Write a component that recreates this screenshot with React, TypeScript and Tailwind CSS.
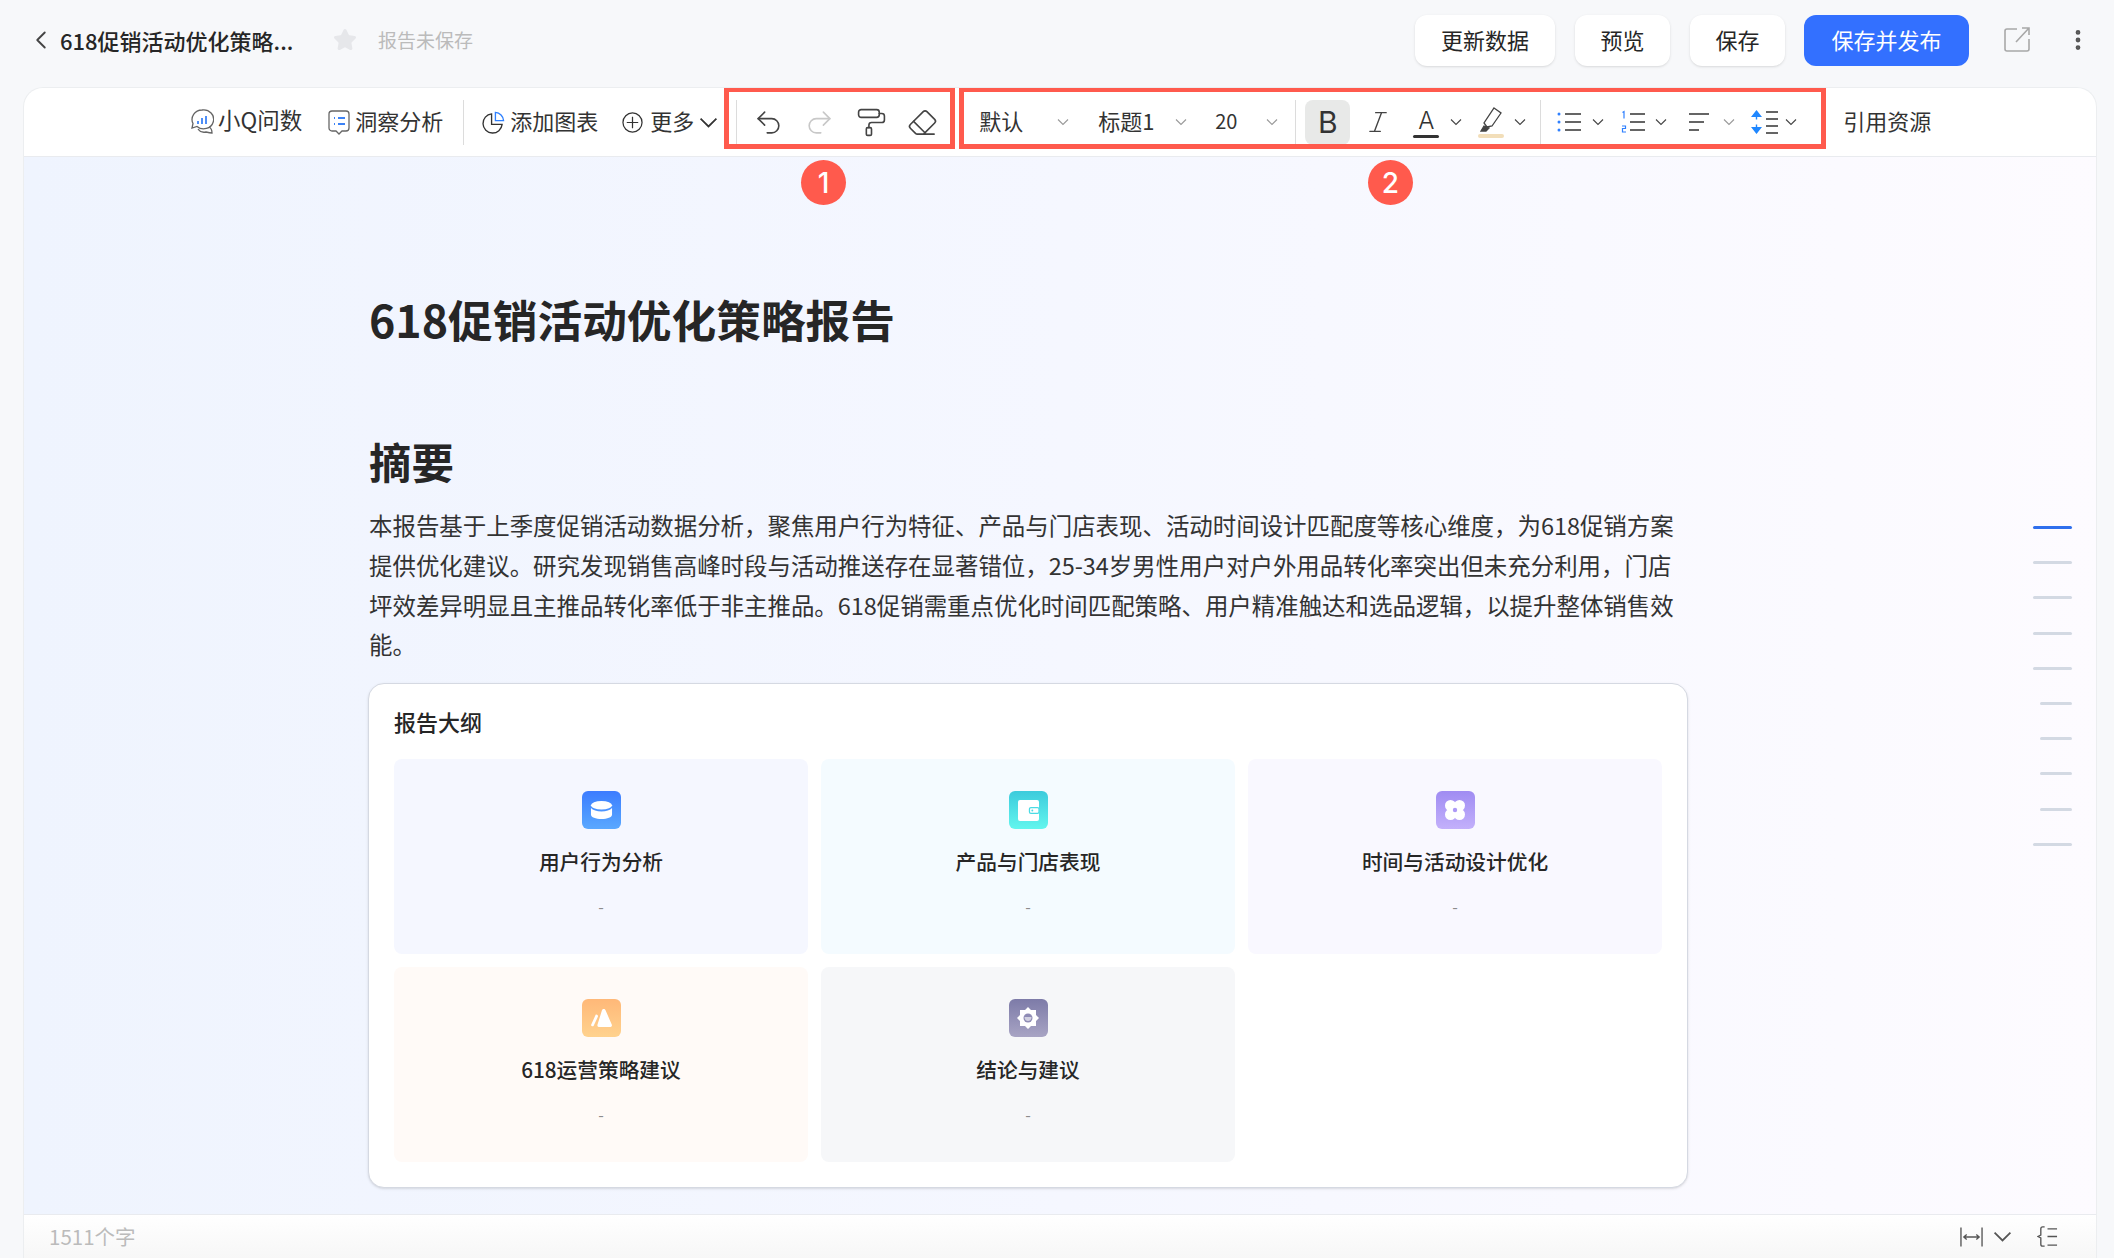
import React from 'react';
import { ChevronLeft, Star, Undo2, Redo2, PaintRoller, Eraser, Italic, MoreVertical } from 'lucide-react';

function Chevron({ className = 'w-[12px] h-[12px] text-[#555]' }: { className?: string }) {
  return (
    <svg viewBox="0 0 12 12" className={className} fill="none" stroke="currentColor" strokeWidth="1.1">
      <path d="M1 3.500 6 8.500 11 3.500" />
    </svg>
  );
}

function Sep() {
  return <div className="w-px h-[45px] bg-[#dcdcdc] shrink-0" />;
}

function BulletIcon() {
  return (
    <svg viewBox="0 0 24 24" className="w-[24px] h-[24px]" fill="none" strokeWidth="1.6">
      <circle cx="2" cy="4" r="1.500" fill="#2f80ff" />
      <circle cx="2" cy="12" r="1.500" fill="#2f80ff" />
      <circle cx="2" cy="20" r="1.500" fill="#2f80ff" />
      <path d="M8 4h16M8 12h16M8 20h16" stroke="#333" />
    </svg>
  );
}

function NumberIcon() {
  return (
    <svg viewBox="0 0 24 24" className="w-[24px] h-[24px]" fill="none" strokeWidth="1.6">
      <path d="M1.500 2.500 3 1.500v7M1 16h3.500v2.500H1.500V22H5" stroke="#2f80ff" strokeWidth="1.200" />
      <path d="M9 4h15M9 12h15M9 20h15" stroke="#333" />
    </svg>
  );
}

function AlignIcon() {
  return (
    <svg viewBox="0 0 22 24" className="w-[22px] h-[24px]" fill="none" stroke="#333" strokeWidth="1.6">
      <path d="M1 4h20M1 12h15M1 20h10" />
    </svg>
  );
}

function LineHeightIcon() {
  return (
    <svg viewBox="0 0 28 26" className="w-[28px] h-[26px]" fill="none" strokeWidth="1.6">
      <path d="M5.500 1 11 8H0ZM5.500 25 0 18H11Z" fill="#1f87ff" />
      <path d="M5.500 8v2.500M5.500 15.500V18" stroke="#1f87ff" strokeWidth="1.400" />
      <path d="M15 3h12M15 10h12M15 17h12M15 24h12" stroke="#333" />
    </svg>
  );
}

function Cell({ bg, icon, iconBg, title }: { bg: string; icon: React.ReactNode; iconBg: string; title: string }) {
  return (
    <div className={`h-[195px] rounded-[8px] flex flex-col items-center pt-[32px] ${bg}`}>
      <div className={`w-[39px] h-[38px] rounded-[6px] flex items-center justify-center ${iconBg}`}>{icon}</div>
      <div className="mt-[17px] text-[20.7px] leading-[30px] font-medium text-[#262626]">{title}</div>
      <div className="mt-[18px] text-[16px] leading-[24px] text-[#8c8c8c]">-</div>
    </div>
  );
}

export default function App() {
  return (
    <div className="w-full h-screen overflow-hidden flex flex-col bg-[#f7f8fa] text-[#262626] font-['Noto_Sans_CJK_SC',sans-serif]">
      {/* Top bar */}
      <header className="h-[87px] shrink-0 flex items-center pl-[26px] pb-[7px]">
        <ChevronLeft className="w-[30px] h-[30px] text-[#444]" strokeWidth={1.5} />
        <div className="ml-[4px] w-[240px] text-[22px] leading-[30px] font-medium text-[#262626]">618促销活动优化策略...</div>
        <Star className="ml-[33px] w-[24px] h-[24px] text-[#e6e7ea]" fill="currentColor" />
        <div className="ml-[21px] text-[19px] text-[#bbbbbb]">报告未保存</div>
        <button className="ml-auto w-[140px] h-[51px] pb-[2px] rounded-[12px] bg-white shadow-sm text-[22px]">更新数据</button>
        <button className="ml-[20px] w-[95px] h-[51px] pb-[2px] rounded-[12px] bg-white shadow-sm text-[22px]">预览</button>
        <button className="ml-[20px] w-[95px] h-[51px] pb-[2px] rounded-[12px] bg-white shadow-sm text-[22px]">保存</button>
        <button className="ml-[19px] w-[165px] h-[51px] pb-[2px] rounded-[12px] bg-[#3370ff] text-white text-[22px]">保存并发布</button>
        <svg viewBox="0 0 26 26" className="ml-[35px] w-[26px] h-[26px]" fill="none" stroke="#a8a8a8" strokeWidth="1.6">
          <path d="M13 2H3a2 2 0 0 0-2 2v18a2 2 0 0 0 2 2h20a2 2 0 0 0 2-2V12M12 15 25 1M18 1h7v7" />
        </svg>
        <MoreVertical className="ml-[35px] mr-[23px] w-[26px] h-[26px] text-[#555]" strokeWidth={2.4} />
      </header>

      {/* Editor panel */}
      <main className="relative flex-1 min-h-0 ml-[23px] mr-[17px] flex flex-col rounded-t-[20px] border border-b-0 border-[#eceef0] bg-white overflow-hidden">
        <div className="h-[69px] shrink-0 flex items-center border-b border-[#e9ebef] pl-[166px] text-[22px] text-[#333]">
          <svg viewBox="0 0 24 28" className="w-[24px] h-[28px] shrink-0" fill="none" stroke="#666" strokeWidth="1.3">
            <path d="M12 2a10 9.500 0 0 0-9 13.500L2 20l5-1.500A10 9.500 0 1 0 12 2Z" />
            <path d="M19 19c2 1 3 3 3 6-2 0-4-.5-6-1-3 .7-6 0-8-3" />
            <path d="M8 13v3M12 10v6M16 8v8" stroke="#3b82f6" strokeWidth="1.8" />
          </svg>
          <span className="ml-[4px] pb-[4px] text-[22.5px]">小Q问数</span>
          <svg viewBox="0 0 22 28" className="ml-[26px] w-[22px] h-[28px] shrink-0" fill="none" stroke="#666" strokeWidth="1.3">
            <path d="M4 3h14a3 3 0 0 1 3 3v14a3 3 0 0 1-3 3h-4l-3 3-3-3H4a3 3 0 0 1-3-3V6a3 3 0 0 1 3-3Z" />
            <path d="M6 10h1M10 10h7M6 16h1M10 16h7" stroke="#3b82f6" strokeWidth="1.8" />
          </svg>
          <span className="ml-[5px] pb-[3px]">洞察分析</span>
          <div className="ml-[20px]"><Sep /></div>
          <svg viewBox="0 0 24 24" className="ml-[18px] w-[23px] h-[23px] shrink-0" fill="none" strokeWidth="1.4">
            <path d="M10 3a10 10 0 1 0 11 11H10Z" stroke="#333" />
            <path d="M14 1.500A9 9 0 0 1 22.500 10H14Z" stroke="#2f80ff" />
          </svg>
          <span className="ml-[5px] pb-[3px]">添加图表</span>
          <svg viewBox="0 0 22 22" className="ml-[24px] w-[21px] h-[21px] shrink-0" fill="none" stroke="#333" strokeWidth="1.3">
            <circle cx="11" cy="11" r="10" />
            <path d="M11 5v12M5 11h12" />
          </svg>
          <span className="ml-[7px] pb-[3px]">更多</span>
          <Chevron className="ml-[5px] w-[19px] h-[19px] text-[#333] shrink-0" />
          <div className="ml-[18px]"><Sep /></div>

          <Undo2 className="ml-[16px] w-[31px] h-[31px] text-[#444] shrink-0" strokeWidth={1.25} />
          <Redo2 className="ml-[20px] w-[31px] h-[31px] text-[#c8c8c8] shrink-0" strokeWidth={1.25} />
          <PaintRoller className="ml-[21px] w-[31px] h-[31px] text-[#444] shrink-0" strokeWidth={1.25} />
          <Eraser className="ml-[20px] w-[31px] h-[31px] text-[#444] shrink-0" strokeWidth={1.25} />

          <span className="ml-[41px] w-[44px] pb-[3px] shrink-0 text-[#333]">默认</span>
          <Chevron className="ml-[34px] w-[12px] h-[12px] text-[#999] shrink-0" />
          <span className="ml-[29px] w-[56px] pb-[3px] shrink-0 text-[#333] whitespace-nowrap">标题1</span>
          <Chevron className="ml-[21px] w-[12px] h-[12px] text-[#999] shrink-0" />
          <span className="ml-[28px] w-[25px] pb-[2px] shrink-0 text-[20px] text-[#333]">20</span>
          <Chevron className="ml-[26px] w-[12px] h-[12px] text-[#999] shrink-0" />
          <div className="ml-[17px]"><Sep /></div>
          <div className="ml-[9px] w-[45px] h-[45px] rounded-[8px] bg-[#e8e9e8] shrink-0 flex items-center justify-center text-[30px] font-['Inter',sans-serif] text-[#333]">B</div>
          <Italic className="ml-[14px] w-[28px] h-[28px] text-[#444] shrink-0" strokeWidth={1.2} />
          <div className="ml-[22px] w-[24px] shrink-0 flex flex-col items-center">
            <span className="text-[24px] leading-[28px] font-['Inter',sans-serif] font-light">A</span>
            <div className="w-[26px] h-[3px] rounded-[2px] bg-[#333]" />
          </div>
          <Chevron className="ml-[12px] w-[12px] h-[12px] text-[#444] shrink-0" />
          <div className="ml-[16px] w-[26px] shrink-0 flex flex-col items-center">
            <svg viewBox="0 0 24 26" className="w-[24px] h-[26px]" fill="none" stroke="#444" strokeWidth="1.3">
              <path d="M15 2l7 5-9 13-5 1-3-4Z" />
              <path d="M5 20l5 2-3 3H2Z" fill="#444" />
            </svg>
            <div className="mt-[2px] w-[26px] h-[4px] rounded-[2px] bg-[#f2deb9]" />
          </div>
          <Chevron className="ml-[10px] w-[12px] h-[12px] text-[#444] shrink-0" />
          <div className="ml-[14px]"><Sep /></div>
          <div className="ml-[16px] shrink-0"><BulletIcon /></div>
          <Chevron className="ml-[11px] w-[12px] h-[12px] text-[#444] shrink-0" />
          <div className="ml-[17px] shrink-0"><NumberIcon /></div>
          <Chevron className="ml-[10px] w-[12px] h-[12px] text-[#444] shrink-0" />
          <div className="ml-[21px] shrink-0"><AlignIcon /></div>
          <Chevron className="ml-[13px] w-[12px] h-[12px] text-[#999] shrink-0" />
          <div className="ml-[16px] shrink-0"><LineHeightIcon /></div>
          <Chevron className="ml-[6px] w-[12px] h-[12px] text-[#444] shrink-0" />
          <span className="ml-[46px] pb-[3px] shrink-0">引用资源</span>
        </div>

        {/* Document */}
        <div className="flex-1 min-h-0 flex justify-between bg-gradient-to-r from-[#eff4fe] via-[#f5f7ff] to-[#fdfbff] pl-[345px] pr-[24px]">
          <div className="w-[1320px] pt-[132px]">
            <h1 className="text-[44.7px] leading-[60px] font-bold text-[#262626]">618促销活动优化策略报告</h1>
            <h2 className="mt-[84px] text-[42.5px] leading-[56px] font-bold text-[#262626]">摘要</h2>
            <p className="mt-[17px] text-[23.45px] leading-[39.8px] text-[#333]">
              本报告基于上季度促销活动数据分析，聚焦用户行为特征、产品与门店表现、活动时间设计匹配度等核心维度，为618促销方案提供优化建议。研究发现销售高峰时段与活动推送存在显著错位，25-34岁男性用户对户外用品转化率突出但未充分利用，门店坪效差异明显且主推品转化率低于非主推品。618促销需重点优化时间匹配策略、用户精准触达和选品逻辑，以提升整体销售效能。
            </p>
            <section className="-ml-px w-[1320px] mt-[18px] h-[505px] rounded-[16px] border border-[#d5d9e2] bg-white px-[25px] pt-[22px] shadow-sm">
              <div className="text-[22px] leading-[30px] font-medium">报告大纲</div>
              <div className="mt-[23px] grid grid-cols-3 gap-[13px]">
                <Cell
                  bg="bg-[#f5f7ff]"
                  iconBg="bg-gradient-to-b from-[#3d7cff] to-[#5aa8ff]"
                  title="用户行为分析"
                  icon={
                    <svg viewBox="0 0 24 20" className="w-[23px] h-[20px]" fill="white">
                      <ellipse cx="12" cy="5" rx="11" ry="4.500" />
                      <path d="M1 8c2 2.500 6 3.500 11 3.500S21 10.500 23 8v7c0 2.500-5 4.500-11 4.500S1 17.500 1 15Z" />
                    </svg>
                  }
                />
                <Cell
                  bg="bg-[#f4fbff]"
                  iconBg="bg-gradient-to-b from-[#3ccbdc] to-[#62f6ee]"
                  title="产品与门店表现"
                  icon={
                    <svg viewBox="0 0 22 22" className="w-[21px] h-[21px]">
                      <rect width="22" height="22" rx="2" fill="white" />
                      <rect x="12" y="8" width="10" height="6" rx="1.500" fill="white" stroke="#4adbe4" strokeWidth="1.300" />
                      <circle cx="15" cy="11" r="1" fill="#4adbe4" />
                    </svg>
                  }
                />
                <Cell
                  bg="bg-[#f9f8ff]"
                  iconBg="bg-gradient-to-b from-[#a08cf2] to-[#c3b0fb]"
                  title="时间与活动设计优化"
                  icon={
                    <svg viewBox="0 0 22 22" className="w-[22px] h-[22px]" fill="white">
                      <circle cx="6.500" cy="6.500" r="5.500" />
                      <circle cx="15.500" cy="6.500" r="5.500" />
                      <circle cx="6.500" cy="15.500" r="5.500" />
                      <circle cx="15.500" cy="15.500" r="5.500" />
                      <rect x="6" y="6" width="10" height="10" />
                      <circle cx="11" cy="11" r="2.200" fill="#ad99f6" />
                    </svg>
                  }
                />
                <Cell
                  bg="bg-[#fffaf7]"
                  iconBg="bg-gradient-to-b from-[#ffb878] to-[#ffd28e]"
                  title="618运营策略建议"
                  icon={
                    <svg viewBox="0 0 24 20" className="w-[23px] h-[18px]" fill="white">
                      <path d="M14.500 0c1 0 1.500.5 2 1.500L23.500 17.500c.4 1.200-.3 2.500-1.500 2.500H9c-1.200 0-1.900-1.300-1.500-2.500L12.500 1.500C13 .5 13.500 0 14.500 0Z" />
                      <path d="M5.500 6.500 .5 17.500c-.5 1.300 1.800 2.500 2.800 1.200L8 8.500C8.500 7 6.500 5.500 5.500 6.500Z" />
                    </svg>
                  }
                />
                <Cell
                  bg="bg-[#f6f7f9]"
                  iconBg="bg-gradient-to-b from-[#7d7ba8] to-[#a8a4c4]"
                  title="结论与建议"
                  icon={
                    <svg viewBox="0 0 24 24" className="w-[24px] h-[24px]">
                      <path d="M12 1l3 3h5v5l3 3-3 3v5h-5l-3 3-3-3H4v-5l-3-3 3-3V4h5Z" fill="white" />
                      <circle cx="12" cy="12" r="4.500" fill="#8f8cb5" />
                      <path d="M8.500 11h7c0 2.500-1.500 4-3.500 4s-3.500-1.500-3.500-4Z" fill="white" opacity="0.600" />
                    </svg>
                  }
                />
              </div>
            </section>
          </div>

          {/* Outline markers */}
          <aside className="pt-[369px] flex flex-col items-end gap-[32.200px]">
            <div className="w-[39px] h-[3px] rounded-full bg-[#2f6fed]" />
            <div className="w-[39px] h-[3px] rounded-full bg-[#d3d9e3]" />
            <div className="w-[39px] h-[3px] rounded-full bg-[#d3d9e3]" />
            <div className="w-[39px] h-[3px] rounded-full bg-[#d3d9e3]" />
            <div className="w-[39px] h-[3px] rounded-full bg-[#d3d9e3]" />
            <div className="w-[32px] h-[3px] rounded-full bg-[#d3d9e3]" />
            <div className="w-[32px] h-[3px] rounded-full bg-[#d3d9e3]" />
            <div className="w-[32px] h-[3px] rounded-full bg-[#d3d9e3]" />
            <div className="w-[32px] h-[3px] rounded-full bg-[#d3d9e3]" />
            <div className="w-[39px] h-[3px] rounded-full bg-[#d3d9e3]" />
          </aside>
        </div>

        {/* Status bar */}
        <footer className="h-[44px] shrink-0 flex items-center border-t border-[#e9ebef] bg-gradient-to-b from-white to-[#f7f7f7] pl-[25px] pr-[38px] text-[20.5px] text-[#bbbbbb]">
          <span>1511个字</span>
          <svg viewBox="0 0 24 22" className="ml-auto w-[23px] h-[22px]" fill="none" stroke="#555" strokeWidth="1.4">
            <path d="M1 1v20M23 1v20M4 11h16M7 8.500 4 11l3 2.500M17 8.500l3 2.500-3 2.500" />
          </svg>
          <Chevron className="ml-[10px] w-[19px] h-[19px] text-[#555]" />
          <svg viewBox="0 0 22 22" className="ml-[25px] w-[21px] h-[21px]" fill="none" stroke="#555" strokeWidth="1.4">
            <path d="M8 1H6a2 2 0 0 0-2 2v6.500L1 11l3 1.500V19a2 2 0 0 0 2 2h2M11 3h10M11 11h10M11 20h10" />
          </svg>
        </footer>

        {/* Annotations */}
        <div className="absolute left-[-1px] top-[-1px] w-[231px] h-[62px] ml-[701px] border-[5px] border-[#ff5a4d] pointer-events-none" />
        <div className="absolute left-[-1px] top-[-1px] w-[867px] h-[62px] ml-[936px] border-[5px] border-[#ff5a4d] pointer-events-none" />
        <div className="absolute left-[777px] top-[72px] w-[45px] h-[45px] rounded-full bg-[#ff5a4d] text-white text-[28px] font-['Inter',sans-serif] font-medium flex items-center justify-center">1</div>
        <div className="absolute left-[1344px] top-[72px] w-[45px] h-[45px] rounded-full bg-[#ff5a4d] text-white text-[28px] font-['Inter',sans-serif] font-medium flex items-center justify-center">2</div>
      </main>
    </div>
  );
}
